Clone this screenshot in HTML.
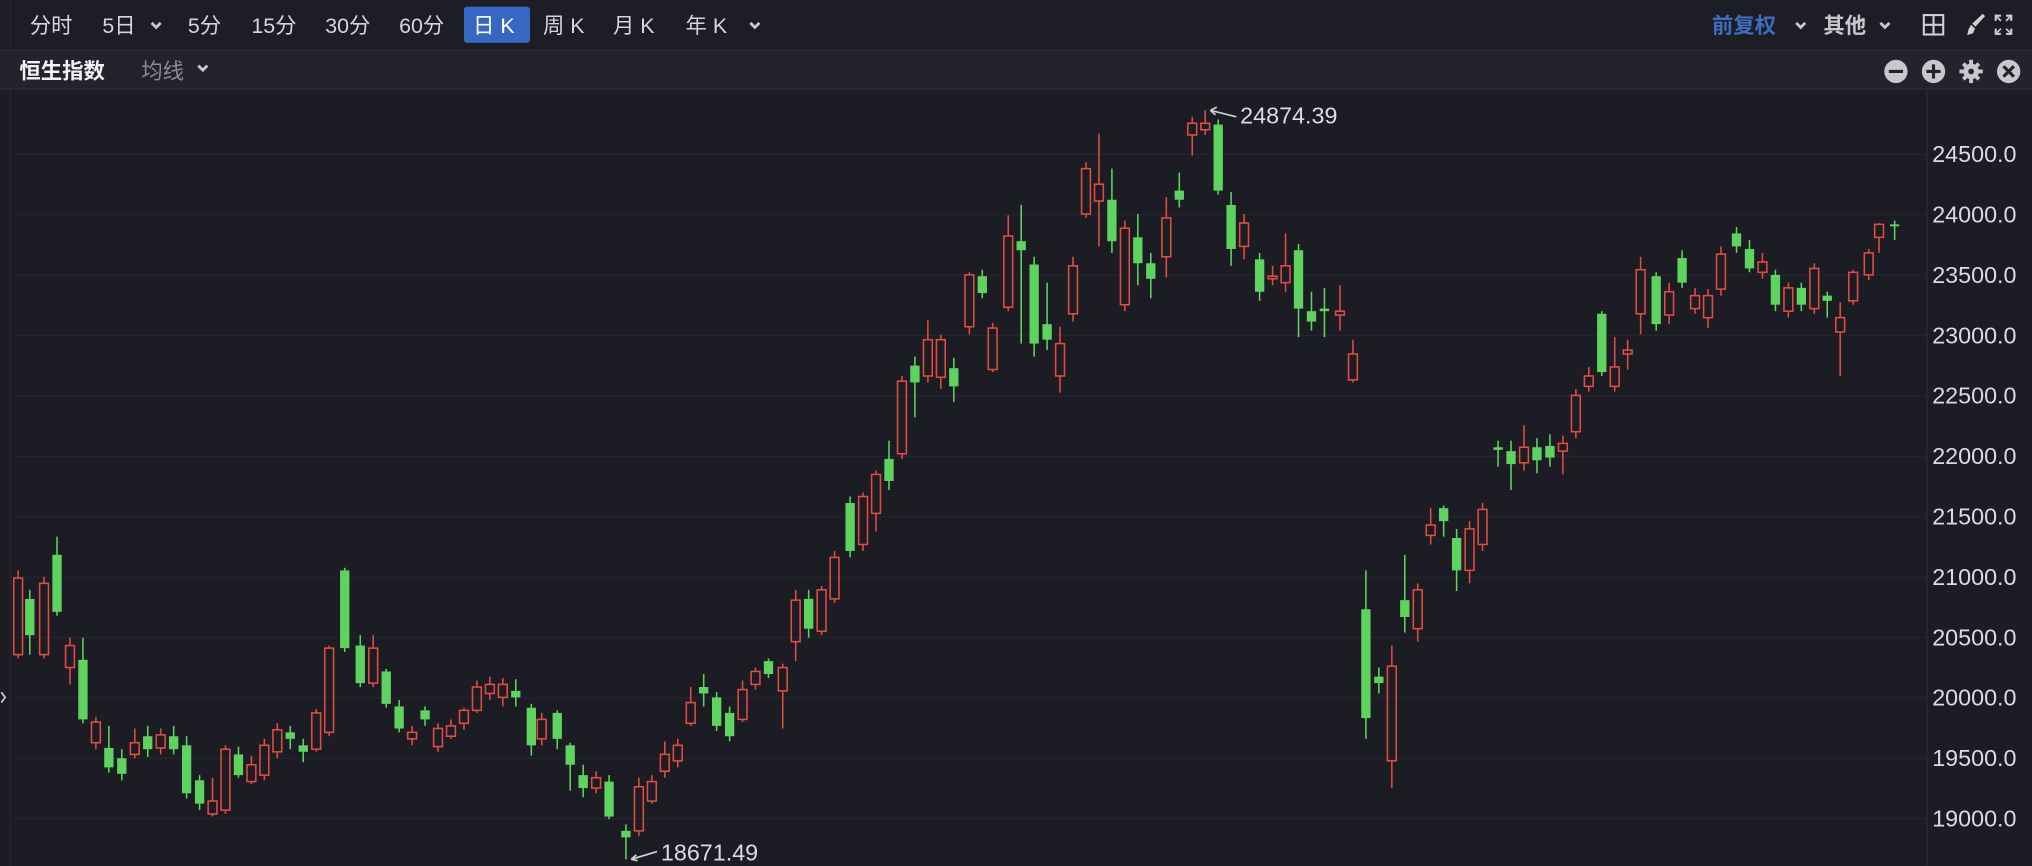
<!DOCTYPE html>
<html><head><meta charset="utf-8"><style>
html,body{margin:0;padding:0;background:#1b1c24;width:2032px;height:866px;overflow:hidden}
svg{display:block}
text{font-family:"Liberation Sans","Noto Sans CJK SC",sans-serif}
</style></head><body>
<svg id="s" width="2032" height="866" viewBox="0 0 1568 668" xmlns="http://www.w3.org/2000/svg">
<rect x="0" y="0" width="1568" height="668" fill="#1b1c24"/>
<rect x="0" y="0" width="1568" height="38.6" fill="#1c1d25"/>
<rect x="0" y="38.6" width="1568" height="30" fill="#22232c"/>
<line x1="0" y1="38.6" x2="1568" y2="38.6" stroke="#2a2b34"/>
<line x1="0" y1="68.6" x2="1568" y2="68.6" stroke="#2e2f38"/>
<line x1="1487" y1="68.6" x2="1487" y2="668" stroke="#2b2c35"/>
<line x1="8" y1="0" x2="8" y2="668" stroke="#262730"/>
<g id="grid"></g>
<g font-size="16.5" fill="#d6d6da">
<text x="23" y="25.5">分时</text>
<text x="79" y="25.5">5日</text><path d="M117 17.5l3.5 3.5 3.5-3.5" stroke="#c8c8cc" stroke-width="2.2" fill="none"/>
<text x="145" y="25.5">5分</text>
<text x="194" y="25.5">15分</text>
<text x="251" y="25.5">30分</text>
<text x="308" y="25.5">60分</text>
<rect x="358" y="5" width="51" height="28" rx="2.5" fill="#3567c3"/>
<text x="365" y="25.5" fill="#fff">日 K</text>
<text x="419" y="25.5">周 K</text>
<text x="473" y="25.5">月 K</text>
<text x="529" y="25.5">年 K</text><path d="M579 17.5l3.5 3.5 3.5-3.5" stroke="#c8c8cc" stroke-width="2.2" fill="none"/>
<text x="15" y="60.5" font-weight="bold" fill="#f2f2f4">恒生指数</text>
<text x="109" y="60.5" fill="#8b8c93">均线</text><path d="M153 50.5l3.5 3.5 3.5-3.5" stroke="#c8c8cc" stroke-width="2.2" fill="none"/>
<text x="1321" y="25.5" fill="#3e6cc0" font-weight="bold">前复权</text><path d="M1386 17.5l3.5 3.5 3.5-3.5" stroke="#c8c8cc" stroke-width="2.2" fill="none"/>
<text x="1407" y="25.5" font-weight="bold" fill="#c8c8cc">其他</text><path d="M1451 17.5l3.5 3.5 3.5-3.5" stroke="#c8c8cc" stroke-width="2.2" fill="none"/>
</g>
<!-- right icons -->
<g fill="none" stroke="#d0d0d4" stroke-width="1.6">
<rect x="1484.5" y="11.5" width="15" height="15"/><line x1="1492" y1="11.5" x2="1492" y2="26.5"/><line x1="1484.5" y1="19" x2="1499.5" y2="19"/>
<path d="M1540 16v-4h4M1548 12h4v4M1540 22v4h4M1548 26h4v-4"/>
<path d="M1541 13l3 3M1551 13l-3 3M1541 25l3-3M1551 25l-3-3" stroke-width="1.3"/>
</g>
<path d="M1530 10.5l1.8 1.8-7.5 8.2-2.4-2.4z M1521 19l3 3-1.5 3.5-4.5 1.5 1-4.5z" fill="#d0d0d4"/>
<g fill="#c8c8cc">
<circle cx="1463" cy="55" r="9"/><circle cx="1492" cy="55" r="9"/><circle cx="1550" cy="55" r="9"/>
<circle cx="1521" cy="55" r="6"/>
</g>
<g stroke="#22232c" stroke-width="2.4">
<line x1="1457.5" y1="55" x2="1468.5" y2="55"/>
<line x1="1486.5" y1="55" x2="1497.5" y2="55"/><line x1="1492" y1="49.5" x2="1492" y2="60.5"/>
<line x1="1546" y1="51" x2="1554" y2="59"/><line x1="1554" y1="51" x2="1546" y2="59"/>
</g>
<g stroke="#c8c8cc" stroke-width="3"><line x1="1521" y1="46" x2="1521" y2="64"/><line x1="1512" y1="55" x2="1530" y2="55"/><line x1="1515" y1="49" x2="1527" y2="61"/><line x1="1527" y1="49" x2="1515" y2="61"/></g>
<circle cx="1521" cy="55" r="2.2" fill="#22232c"/>
<g id="c"></g>
<g fill="#dcdce0" font-size="18" id="lab"></g>
<g fill="#dcdce0" font-size="18">
<text x="957" y="95">24874.39</text>
<text x="510" y="664">18671.49</text>
</g>
<g stroke="#d0d0d4" stroke-width="1.3" fill="none">
<path d="M954 90L934 85M934 85l5-2.5M934 85l4 3.5"/>
<path d="M507 657L487 663M487 663l4-3.5M487 663l5 1"/>
<path d="M1 534l3 4-3 4"/>
</g>
</svg>
<script>
var NS="http://www.w3.org/2000/svg";
function el(t,a,p){var e=document.createElementNS(NS,t);for(var k in a)e.setAttribute(k,a[k]);p.appendChild(e);return e;}
var g=document.getElementById('grid'),lab=document.getElementById('lab');
for(var i=0;i<12;i++){var p=24500-i*500,y=119+i*46.6;
el('line',{x1:9,y1:y,x2:1487,y2:y,stroke:'#24252e','stroke-width':1},g);
var t=el('text',{x:1491,y:y+6},lab);t.textContent=p.toFixed(1);}
var d=`14 R 446 505 440 508
23 G 462 490 455 505
34 R 450 505 445 508
44 G 428 472 414 475
54 R 498 515 492 528
64 G 509 555 492 558
74 R 557 573 553 578
84 G 577 592 560 596
94 G 585 597 578 602
104 R 573 582 562 585
114 G 568 578 560 584
124 R 567 577 562 582
134 G 568 578 560 582
144 G 575 612 568 616
154 G 602 620 598 625
164 R 618 628 600 630
174 R 578 625 575 628
184 G 582 598 576 600
194 R 590 603 583 605
204 R 575 598 570 602
214 R 563 580 558 585
224 G 565 570 560 578
234 G 575 580 570 588
244 R 550 578 547 580
254 R 500 565 498 568
266 G 440 500 438 503
278 G 498 527 490 530
288 R 500 527 490 530
298 G 518 543 516 546
308 G 545 562 540 565
318 R 565 570 560 575
328 G 548 555 545 560
338 R 562 576 558 580
348 R 560 568 555 570
358 R 548 558 546 563
368 R 530 548 525 550
378 R 528 535 522 540
388 R 528 538 523 545
398 G 533 538 524 545
410 G 546 575 543 583
418 R 555 570 550 575
430 G 550 570 548 578
440 G 575 590 573 610
450 G 598 608 590 615
460 R 600 608 595 612
470 G 603 630 598 632
483 G 641 646 636 663
493 R 607 641 600 645
503 R 603 618 598 620
513 R 582 595 572 600
523 R 575 587 570 592
533 R 542 558 530 560
543 G 530 535 520 545
553 G 538 560 534 564
563 G 550 568 545 572
573 R 532 555 525 557
583 R 518 528 515 532
593 G 510 520 508 523
604 R 515 533 512 562
614 R 463 495 455 510
624 G 462 485 455 492
634 R 455 487 452 490
644 R 430 462 425 465
656 G 388 425 383 430
666 R 383 420 380 425
676 R 366 396 363 410
686 G 354 371 340 378
696 R 294 350 290 354
706 G 282 295 275 322
716 R 262 290 247 295
726 R 262 291 258 300
736 G 284 298 276 310
748 R 212 252 210 258
758 G 213 226 208 230
766 R 253 285 249 287
778 R 182 237 166 240
788 G 186 193 158 265
798 G 204 265 198 275
808 G 250 262 218 270
818 R 265 290 252 303
828 R 205 242 198 248
838 R 130 165 125 168
848 R 142 155 103 190
858 G 154 186 130 195
868 R 176 235 170 240
878 G 183 203 165 220
888 G 203 215 195 230
900 R 168 198 152 214
910 G 147 154 133 160
920 R 95 104 90 120
930 R 95 100 85 104
940 G 96 147 92 150
950 G 158 192 148 205
960 R 172 190 165 200
972 G 200 225 195 232
982 R 213 215 205 220
992 R 205 218 180 225
1002 G 193 238 188 260
1012 G 240 248 225 255
1022 G 238 240 222 260
1034 R 240 243 220 255
1044 R 273 293 262 295
1054 G 470 554 440 570
1064 G 522 527 515 535
1074 R 514 587 498 608
1084 G 463 476 428 488
1094 R 455 485 450 495
1104 R 405 413 392 420
1114 G 392 402 390 414
1124 G 415 440 408 456
1134 R 408 440 402 450
1144 R 393 420 388 425
1156 G 345 347 340 360
1166 G 348 358 340 378
1176 R 345 357 328 363
1186 G 345 355 338 365
1196 G 344 353 335 360
1206 R 342 348 336 366
1216 R 305 333 300 338
1226 R 290 298 283 302
1236 G 242 287 240 290
1246 R 283 298 260 302
1256 R 270 273 262 285
1266 R 208 242 198 258
1278 G 213 250 210 255
1288 R 225 243 218 250
1298 G 199 218 193 222
1308 R 228 238 222 242
1318 R 228 245 223 253
1328 R 196 223 190 228
1340 G 180 190 175 195
1350 G 192 207 185 210
1360 R 202 210 195 215
1370 G 212 235 208 240
1380 R 222 240 218 245
1390 G 222 235 218 240
1400 R 207 238 203 242
1410 G 228 232 225 245
1420 R 245 256 233 290
1430 R 210 232 208 235
1442 R 195 212 192 216
1450 R 173 183 172 195
1462 G 173 174 170 185`;
var c=document.getElementById('c');
d.split('\n').forEach(function(l){var a=l.trim().split(/\s+/),x=+a[0],col=a[1]=='R'?'#e34c40':'#5fd35f',t=+a[2],b=+a[3],h=+a[4],lo=+a[5];
if(b-t<1.5)b=t+1.5;
if(a[1]=='R'){
el('line',{x1:x,y1:h,x2:x,y2:t,stroke:col,'stroke-width':1.2},c);
el('line',{x1:x,y1:b,x2:x,y2:lo,stroke:col,'stroke-width':1.2},c);
el('rect',{x:x-3.4,y:t,width:6.8,height:b-t,fill:'none',stroke:col,'stroke-width':1.2},c);
}else{
el('line',{x1:x,y1:h,x2:x,y2:lo,stroke:col,'stroke-width':1.2},c);
el('rect',{x:x-3.6,y:t,width:7.2,height:b-t,fill:col},c);
}});
</script>
</body></html>
